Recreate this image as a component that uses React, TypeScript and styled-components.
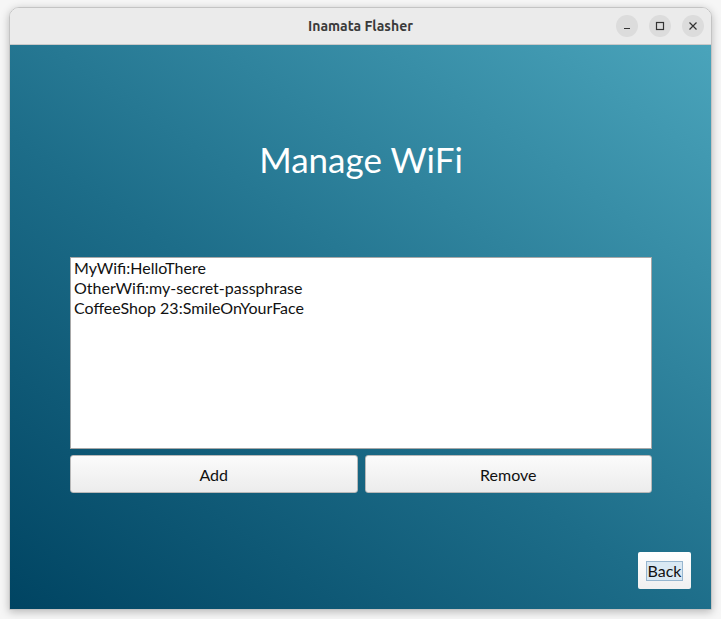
import styled, { createGlobalStyle } from "styled-components";

const Global = createGlobalStyle`
    html, body {
        margin: 0;
        padding: 0;
        background: #f6f6f6;
        width: 721px;
        height: 619px;
        overflow: hidden;
    }
`;

const Desk = styled.div`
    width: 721px;
    height: 619px;
    padding: 7px 10px 9px 9px;
    box-sizing: border-box;
`;

const Window = styled.div`
    width: 703px;
    height: 603px;
    display: flex;
    flex-direction: column;
    border-radius: 10px 10px 0 0;
    overflow: hidden;
    border: 1px solid #c4c4c4;
    box-sizing: border-box;
    box-shadow: 0 2px 8px rgba(0, 0, 0, 0.25);
`;

const TitleBar = styled.div`
    height: 36px;
    flex: none;
    background: #ebebeb;
    border-bottom: 1px solid #c9c9c9;
    display: flex;
    align-items: center;
    justify-content: center;
    position: relative;
    font-family: "Ubuntu", "DejaVu Sans", sans-serif;
    font-weight: bold;
    font-size: 14px;
    color: #3a3a3a;
`;

const Controls = styled.div`
    position: absolute;
    right: 7px;
    top: 7px;
    display: flex;
    gap: 11px;
`;

const Ctl = styled.div`
    width: 22px;
    height: 22px;
    border-radius: 50%;
    background: #dcdcdc;
    display: flex;
    align-items: center;
    justify-content: center;
`;

const Body = styled.div`
    flex: 1;
    background: linear-gradient(35deg, #004462 0%, #1d6d89 45%, #4aa4bb 100%);
    display: flex;
    flex-direction: column;
    padding: 0 59px 0 60px;
    position: relative;
    font-family: Lato, "Open Sans", sans-serif;
`;

const Heading = styled.h1`
    margin: 90px 0 0 0;
    height: 48px;
    text-align: center;
    color: #fff;
    font-weight: 400;
    font-size: 35px;
    line-height: 48px;
`;

const ListBox = styled.div`
    margin-top: 74px;
    height: 192px;
    background: #fff;
    border: 1px solid #a8a8a8;
    box-sizing: border-box;
    padding: 0 3px;
    font-size: 16px;
    line-height: 20px;
    color: #111;
`;

const Row = styled.div`
    display: grid;
    grid-template-columns: 1fr 1fr;
    gap: 7px;
    margin-top: 6px;
`;

const Btn = styled.button`
    height: 38px;
    background: linear-gradient(#fbfbfb, #ececec);
    border: 1px solid #b8b8b8;
    border-radius: 3px;
    font-family: Lato, "Open Sans", sans-serif;
    font-size: 16px;
    color: #111;
`;

const BackWrap = styled.div`
    position: absolute;
    right: 20px;
    bottom: 20px;
    width: 53px;
    height: 37px;
    background: linear-gradient(#ffffff, #f0f0f0);
    border-radius: 2px;
    display: flex;
    align-items: center;
    justify-content: center;
`;

const BackLabel = styled.span`
    background: #d9e8f3;
    border: 1px solid #97b6cf;
    font-size: 16px;
    line-height: 18px;
    padding: 0 1px;
    color: #111;
`;

export default function App() {
    const entries = [
        "MyWifi:HelloThere",
        "OtherWifi:my-secret-passphrase",
        "CoffeeShop 23:SmileOnYourFace",
    ];
    return (
        <>
            <Global />
            <Desk>
                <Window>
                    <TitleBar>
                        Inamata Flasher
                        <Controls>
                            <Ctl>
                                <svg width="10" height="10" viewBox="0 0 10 10">
                                    <path d="M2 7.5h6" stroke="#333" strokeWidth="1.2" />
                                </svg>
                            </Ctl>
                            <Ctl>
                                <svg width="10" height="10" viewBox="0 0 10 10">
                                    <rect x="1.5" y="1.5" width="7" height="7" fill="none" stroke="#333" strokeWidth="1.2" />
                                </svg>
                            </Ctl>
                            <Ctl>
                                <svg width="10" height="10" viewBox="0 0 10 10">
                                    <path d="M1.5 1.5l7 7M8.5 1.5l-7 7" stroke="#333" strokeWidth="1.2" />
                                </svg>
                            </Ctl>
                        </Controls>
                    </TitleBar>
                    <Body>
                        <Heading>Manage WiFi</Heading>
                        <ListBox>
                            {entries.map((e) => <div key={e}>{e}</div>)}
                        </ListBox>
                        <Row>
                            <Btn>Add</Btn>
                            <Btn>Remove</Btn>
                        </Row>
                        <BackWrap>
                            <BackLabel>Back</BackLabel>
                        </BackWrap>
                    </Body>
                </Window>
            </Desk>
        </>
    );
}
